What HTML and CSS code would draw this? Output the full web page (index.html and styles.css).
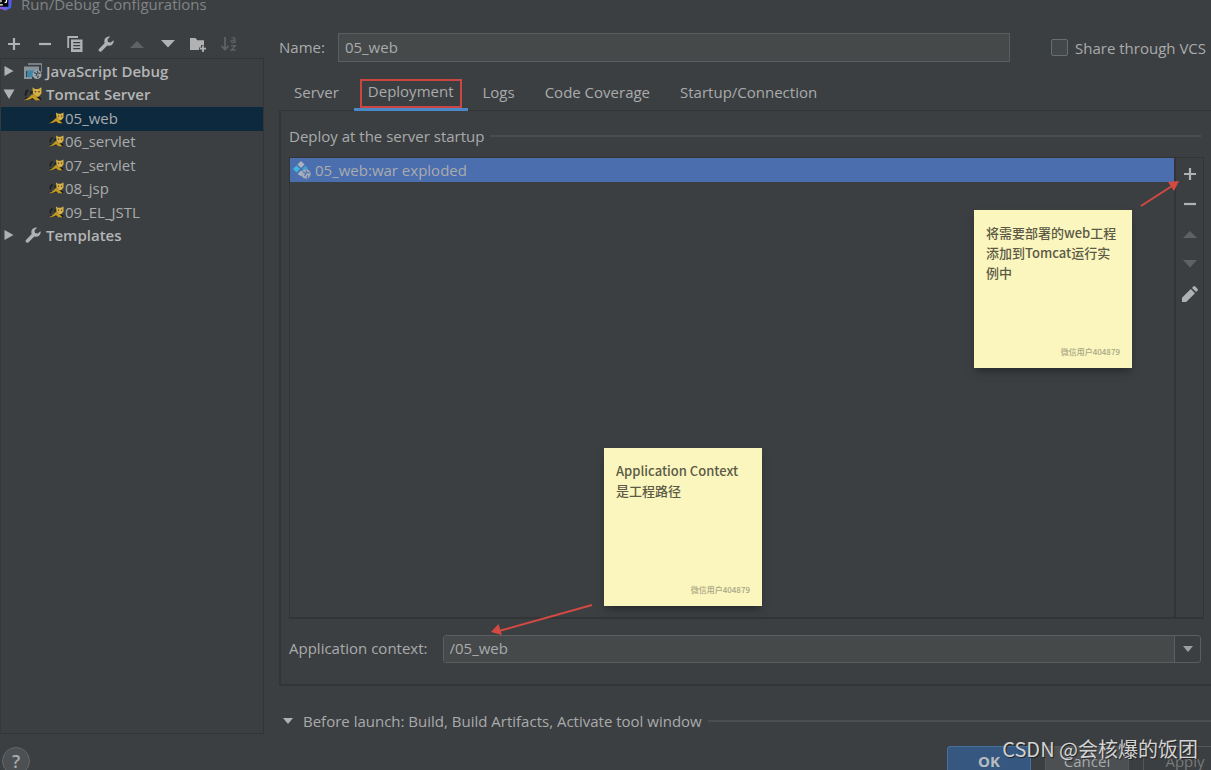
FILE: index.html
```html
<!DOCTYPE html>
<html lang="en">
<head>
<meta charset="utf-8">
<title>Run/Debug Configurations</title>
<link rel="stylesheet" href="styles.css">
</head>
<body>
<svg class="defs" aria-hidden="true">
  <symbol id="plus" viewBox="0 0 16 16"><path d="M8 2v12M2 8h12" stroke="currentColor" stroke-width="2.2" fill="none"/></symbol>
  <symbol id="minus" viewBox="0 0 16 16"><path d="M2 8h12" stroke="currentColor" stroke-width="2.2" fill="none"/></symbol>
  <symbol id="up" viewBox="0 0 16 16"><path d="M1 12L8 5l7 7z" fill="currentColor"/></symbol>
  <symbol id="down" viewBox="0 0 16 16"><path d="M1 4h14l-7 7.500z" fill="currentColor"/></symbol>
  <symbol id="wrench" viewBox="0 0 16 16"><path d="M15.600 4.200a4.700 4.700 0 0 1-6.300 5.300L3.600 15.300a1.600 1.600 0 0 1-2.600-.3 1.600 1.600 0 0 1 0-2.100L6.700 7A4.700 4.700 0 0 1 12.200.6L9.500 3.400l.5 2.700 2.700.4z" fill="currentColor"/></symbol>
  <symbol id="tomcat" viewBox="0 0 16 14">
    <path d="M1.500 8.500Q1 4.500 4 3.500M5.500 6l3-1.500M1 11h14M12 9l3 3" stroke="#1c1d1b" stroke-width="1.600" fill="none"/>
    <path d="M7.500 1l2.200 1.500h3L15.500 1v5.500L13 9.500h-2L8 6.600z" fill="#d6b045"/>
    <path d="M9 7Q6.500 7 5 9.500L0 12.800l5-.9 2.500-1.400L10 12.500h4.500l-3.500-3z" fill="#c19a24"/>
    <path d="M9.500 5h1.300M12.700 5H14" stroke="#2b2616" stroke-width="1"/>
  </symbol>
</svg>

<div class="dialog">
  <header class="titlebar">
    <svg class="logo" viewBox="0 0 14 16" aria-hidden="true">
      <defs><linearGradient id="brand" x1="0" y1="1" x2="1" y2="0"><stop offset="0" stop-color="#c04bd8"/><stop offset=".45" stop-color="#3b6bf0"/><stop offset="1" stop-color="#7a3fe0"/></linearGradient></defs>
      <path d="M0 0h13l-1 12-6 3-6-2z" fill="url(#brand)"/>
      <path d="M0 0h9v11H0z" fill="#08080a"/>
      <path d="M0 9h3M1 1v5M5 1h2v4q0 1.500-2 1.500" stroke="#fff" stroke-width="1.300" fill="none"/>
    </svg>
    <h1>Run/Debug Configurations</h1>
  </header>

  <main class="main">
    <aside class="sidebar">
      <div class="toolbar">
        <button aria-label="Add"><svg><use href="#plus"/></svg></button>
        <button aria-label="Remove"><svg><use href="#minus"/></svg></button>
        <button aria-label="Copy"><svg viewBox="0 0 16 16"><path d="M1.200 12V1H11" stroke="currentColor" stroke-width="1.800" fill="none"/><path fill-rule="evenodd" d="M4 3.500h11.500V16H4zM6.200 6v1.200h7V6zM6.200 9v1.200h7V9zM6.200 12v1.200h7V12z" fill="currentColor"/></svg></button>
        <button aria-label="Edit templates"><svg><use href="#wrench"/></svg></button>
        <button aria-label="Move up" disabled><svg><use href="#up"/></svg></button>
        <button aria-label="Move down"><svg><use href="#down"/></svg></button>
        <button aria-label="New folder"><svg viewBox="0 0 16 16"><path d="M0 2h5.500l1.800 2.200H14V9h-3v2.500H9V14H0z" fill="currentColor"/><path d="M13 9.500v6.500M9.800 12.700h6.400" stroke="currentColor" stroke-width="1.800"/></svg></button>
        <button aria-label="Sort" disabled><svg viewBox="0 0 16 16"><path d="M4 1v12M.5 9.800L4 13.500l3.500-3.700" stroke="currentColor" stroke-width="1.800" fill="none"/><path d="M10.500 2q3.500-1 3.500 1v4M14 4.200q-4-.2-3.700 1.500.8 1.600 3.700 0M10 9.700h4.300L10.300 14h4.400" stroke="currentColor" stroke-width="1.300" fill="none"/></svg></button>
      </div>
      <ul class="tree">
        <li class="group"><button class="twisty" aria-label="Expand"><svg viewBox="0 0 12 12"><path d="M1.500 1v10l9-5z"/></svg></button>
          <svg class="icon wide" viewBox="0 0 18 16"><path d="M4 1h14v8" stroke="#87939a" stroke-width="1.600" fill="none"/><path d="M0 3.500h15V8H2v6h6v2H0z" fill="#87939a"/><path d="M3 7.500h9L8.500 14H3z" fill="#3d86a5"/><circle cx="13" cy="11.500" r="4.500" fill="#9aa7b0"/><path d="M10 9.500l3 1.500-1 2M13 8l1 2 2.500.5M13.500 15l1-2.500" stroke="#3c3f41" stroke-width="1.100" fill="none"/></svg>
          <span>JavaScript Debug</span></li>
        <li class="group"><button class="twisty" aria-label="Collapse"><svg viewBox="0 0 12 12"><path d="M.5 1.500h11L6 11z"/></svg></button>
          <svg class="icon wide"><use href="#tomcat"/></svg><span>Tomcat Server</span></li>
        <li class="leaf selected"><svg class="icon"><use href="#tomcat"/></svg><span>05_web</span></li>
        <li class="leaf"><svg class="icon"><use href="#tomcat"/></svg><span>06_servlet</span></li>
        <li class="leaf"><svg class="icon"><use href="#tomcat"/></svg><span>07_servlet</span></li>
        <li class="leaf"><svg class="icon"><use href="#tomcat"/></svg><span>08_jsp</span></li>
        <li class="leaf"><svg class="icon"><use href="#tomcat"/></svg><span>09_EL_JSTL</span></li>
        <li class="group"><button class="twisty" aria-label="Expand"><svg viewBox="0 0 12 12"><path d="M1.500 1v10l9-5z"/></svg></button>
          <svg class="icon wide"><use href="#wrench"/></svg><span>Templates</span></li>
      </ul>
    </aside>

    <section class="content">
      <div class="name-row">
        <label class="name-label" for="name">Name:</label>
        <input id="name" class="field" type="text" value="05_web">
        <div class="share"><input id="share" type="checkbox"><label for="share">Share through VCS</label></div>
      </div>
      <nav class="tabs">
        <button>Server</button>
        <button class="active"><span>Deployment</span></button>
        <button>Logs</button>
        <button>Code Coverage</button>
        <button>Startup/Connection</button>
      </nav>
      <div class="panel">
        <h2 class="heading">Deploy at the server startup</h2>
        <div class="deploy">
          <ul class="artifacts">
            <li><svg class="artifact" viewBox="0 0 18 18"><path d="M8 0l3.500 3.500L8 7 4.500 3.500z" fill="#a9b4bf"/><path d="M3.500 4.500L7 8l-3.500 3.500L0 8z" fill="#40b6e0"/><path d="M12.500 4.500L15 7.500l-5 3L9 8z" fill="#3f9fd5"/><path d="M8 9.500l2 2-1.500 4L4.500 13z" fill="#a9b4bf"/><circle cx="13" cy="13" r="4.700" fill="#9fabb8"/><path d="M10 11l3 1.500-1.500 2.500M13 9.500l1 2 2.500.5M14 17l1-2.500" stroke="#4b6eaf" stroke-width="1.100" fill="none"/></svg><span>05_web:war exploded</span></li>
          </ul>
          <div class="side-tools">
            <button aria-label="Add artifact"><svg><use href="#plus"/></svg></button>
            <button aria-label="Remove artifact"><svg><use href="#minus"/></svg></button>
            <button aria-label="Move up" disabled><svg><use href="#up"/></svg></button>
            <button aria-label="Move down" disabled><svg><use href="#down"/></svg></button>
            <button aria-label="Edit artifact"><svg viewBox="0 0 16 16"><path d="M0 16v-4.200L8.800 3l4.200 4.200L4.200 16zM10 1.900l1.300-1.300q1-1 2 0l2.100 2.100q1 1 0 2L14.100 6z" fill="currentColor"/></svg></button>
          </div>
        </div>
        <div class="context-row">
          <label for="context">Application context:</label>
          <div class="combo">
            <input id="context" type="text" value="/05_web">
            <button aria-label="Show options"><svg viewBox="0 0 10 10"><path d="M0 2h10L5 8z" fill="currentColor"/></svg></button>
          </div>
        </div>
      </div>
      <div class="before">
        <button class="before-toggle" aria-label="Collapse"><svg viewBox="0 0 10 10"><path d="M0 2h10L5 8z" fill="currentColor"/></svg></button>
        <h2 class="heading">Before launch: Build, Build Artifacts, Activate tool window</h2>
      </div>
    </section>
  </main>

  <footer class="footer">
    <button class="help" aria-label="Help">?</button>
    <div class="actions">
      <button class="primary">OK</button>
      <button>Cancel</button>
      <button disabled>Apply</button>
    </div>
  </footer>

  <div class="note note-context"><p>Application Context<br>是工程路径</p><small>微信用户404879</small></div>
  <div class="note note-deploy"><p>将需要部署的web工程添加到Tomcat运行实例中</p><small>微信用户404879</small></div>
  <svg class="arrow arrow-context" viewBox="0 0 102 32" aria-hidden="true"><path d="M101 1L8 27" stroke="#d24a43" stroke-width="2"/><path d="M0 28L7.500 20 11 31z" fill="#d24a43"/></svg>
  <svg class="arrow arrow-deploy" viewBox="0 0 40 28" aria-hidden="true"><path d="M1 25L32 5" stroke="#d24a43" stroke-width="2"/><path d="M39 0L28 1 34 10z" fill="#d24a43"/></svg>
  <div class="watermark">CSDN @会核爆的饭团</div>
</div>
</body>
</html>
```

FILE: styles.css
```css
* { box-sizing: border-box; }

body {
  margin: 0;
  background: #3c3f41;
  color: #a9abac;
  font: 15px/20px "Open Sans", "Noto Sans", "Noto Sans CJK SC", sans-serif;
}

button, input { font: inherit; color: inherit; }
button { padding: 0; border: 0; background: none; }
h1, h2, p, ul { margin: 0; padding: 0; font: inherit; }
ul { list-style: none; }
svg { display: block; flex: none; }
.defs { display: none; }

.dialog {
  position: relative;
  display: flex;
  flex-direction: column;
  height: 100vh;
  overflow: hidden;
}

.titlebar {
  display: flex;
  align-items: center;
  gap: 8px;
  height: 10px;
  padding-bottom: 2px;
  color: #818486;
}
.logo { width: 13px; height: 16px; }

.main { display: flex; flex: 1; min-height: 0; }

.sidebar {
  display: flex;
  flex-direction: column;
  width: 264px;
  padding-top: 20px;
}
.toolbar {
  display: flex;
  justify-content: space-between;
  align-items: center;
  height: 28px;
  padding: 0 27px 0 6px;
}
.toolbar svg, .side-tools svg { width: 16px; height: 16px; }
.toolbar button, .side-tools button { color: #afb1b3; }
.toolbar button:disabled, .side-tools button:disabled { color: #5f6264; }

.tree {
  display: grid;
  grid-template-rows: repeat(8, minmax(0, 188fr));
  flex: 1;
  border: 1px solid #323537;
  border-left-color: #36393b;
  padding-top: 1px;
  padding-bottom: 485px;
}
.tree li { display: flex; align-items: center; padding-bottom: 2px; }
.group { gap: 4px; padding-left: 2px; font-weight: 600; color: #b4b6b7; }
.leaf { gap: 1px; padding-left: 48px; }
.selected { background: #0d293e; }
.twisty svg { width: 12px; height: 12px; fill: #afb1b3; }
.icon { width: 15px; height: 14px; color: #afb1b3; }
.wide { width: 18px; height: 16px; margin-left: 5px; }

.content {
  display: flex;
  flex-direction: column;
  flex: 1;
  min-width: 0;
  padding: 23px 0 0 15px;
}

.name-row { display: flex; align-items: center; gap: 13px; padding-right: 5px; }
.name-label { padding-bottom: 2px; }
.field {
  flex: 1;
  min-width: 0;
  height: 29px;
  padding: 0 6px 2px;
  border: 1px solid #5b5e60;
  background: #45494a;
}
.share { display: flex; align-items: center; gap: 7px; margin-left: 28px; }
.share input {
  appearance: none;
  width: 17px;
  height: 17px;
  margin: 0;
  border: 1px solid #6b6e6f;
  border-radius: 2px;
  background: #43494a;
}

.tabs { display: flex; height: 49px; padding-top: 17px; margin-bottom: -1px; z-index: 1; }
.tabs button { padding: 0 15px 4px; border-bottom: 3px solid transparent; }
.tabs .active { padding: 0 6px; border-bottom-color: #4a88c7; }
.tabs .active span { display: block; padding: 0 6px 5px; border: 2px solid #cb4640; }

.panel {
  display: flex;
  flex-direction: column;
  flex: 1;
  padding: 15px 7px 21px 8px;
  border: 2px solid #323436;
  border-top-width: 1px;
  border-right: 0;
}
.heading { display: flex; align-items: center; gap: 6px; flex: 1; white-space: nowrap; }
.heading::after { content: ""; flex: 1; height: 2px; background: #4b4e50; }
.panel .heading { flex: none; padding-right: 3px; }

.deploy {
  display: flex;
  flex: 1;
  margin-top: 11px;
  border: 1px solid #323436;
  border-bottom-width: 2px;
}
.artifacts { flex: 1; }
.artifacts li { display: flex; align-items: center; gap: 4px; height: 24px; padding-left: 3px; background: #4b6eaf; }
.artifact { width: 18px; height: 18px; }
.side-tools {
  display: flex;
  flex-direction: column;
  align-items: center;
  gap: 14px;
  width: 29px;
  padding-top: 8px;
  border-left: 2px solid #323436;
}

.context-row { display: flex; align-items: center; gap: 15px; padding: 16px 3px 0 0; }
.context-row label { padding-bottom: 2px; }
.combo { display: flex; flex: 1; height: 28px; border: 1px solid #5b5e60; border-radius: 3px; overflow: hidden; }
.combo input { flex: 1; min-width: 0; padding: 0 6px 2px; border: 0; background: #45494a; }
.combo button { display: grid; place-items: center; width: 26px; border-left: 1px solid #5b5e60; color: #9da0a2; }
.combo svg, .before-toggle svg { width: 10px; height: 10px; }

.before { display: flex; align-items: center; gap: 10px; padding: 25px 0 3px 4px; }
.before-toggle { color: #afb1b3; }

.footer { display: flex; justify-content: space-between; height: 36px; padding-left: 2px; }
.help {
  width: 28px;
  height: 28px;
  margin-top: 13px;
  border: 1px solid #646769;
  border-radius: 50%;
  background: #4c5052;
  font-size: 18px;
  font-weight: 600;
}
.actions { display: flex; gap: 14px; padding-top: 12px; margin-right: -16px; }
.actions button { width: 84px; height: 30px; border: 1px solid #56595b; border-radius: 3px; background: #4c5052; }
.actions .primary { border-color: #43709f; background: #365880; font-weight: 700; color: #b8bdc2; }
.actions button:disabled { background: none; color: #777a7c; }

/* Sticky notes and arrows float over the dialog. */
.note {
  position: absolute;
  display: flex;
  flex-direction: column;
  justify-content: space-between;
  width: 158px;
  height: 158px;
  padding: 13px 12px 10px;
  background: #faf6be;
  box-shadow: 0 5px 8px -2px #26282a;
  color: #5c5a46;
  font: 500 13px/20px "Noto Sans CJK SC", sans-serif;
}
.note small { align-self: flex-end; color: #aaa785; font-size: 8px; line-height: 12px; }
.note-context { left: 604px; top: 448px; }
.note-deploy { left: 974px; top: 210px; }
.arrow { position: absolute; }
.arrow-context { left: 491px; top: 604px; width: 102px; height: 32px; }
.arrow-deploy { left: 1140px; top: 181px; width: 40px; height: 28px; }
.watermark {
  position: absolute;
  right: 13px;
  bottom: 8px;
  color: #d2d3d4;
  font: 20px/26px "Noto Sans CJK SC", sans-serif;
  text-shadow: 1px 1px 1px #222;
}
```
